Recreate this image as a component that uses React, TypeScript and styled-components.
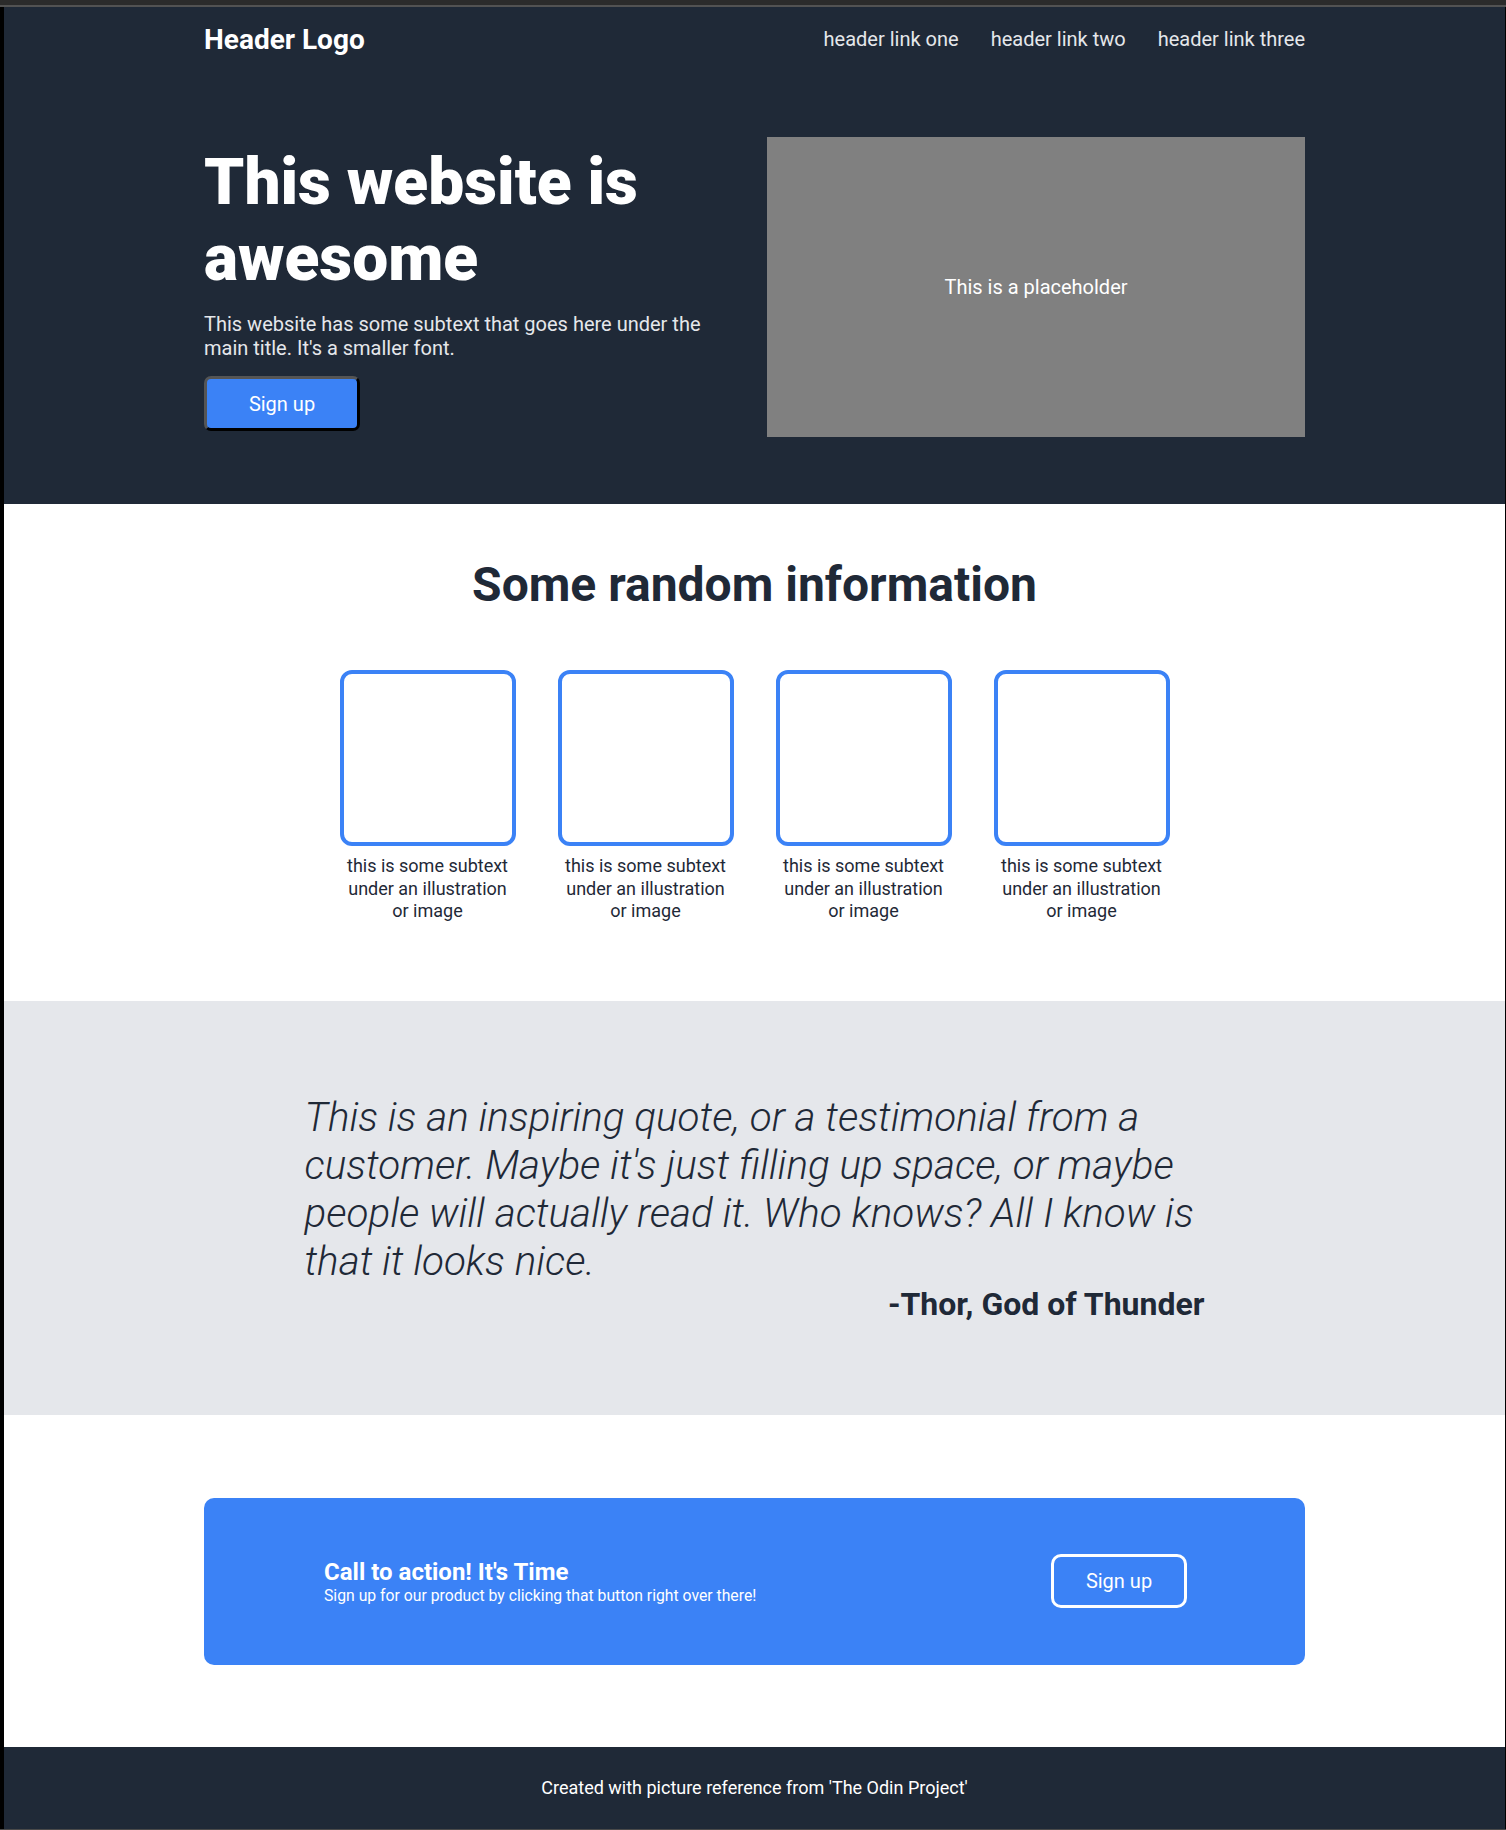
import React from "react";
import styled, { createGlobalStyle } from "styled-components";

const GlobalStyle = createGlobalStyle`
  html, body { margin: 0; padding: 0; background: #ffffff; }
  body { font-family: Roboto, "Liberation Sans", Arial, sans-serif; }
  * { box-sizing: border-box; }
`;

const Window = styled.div`
  width: 1506px;
  border-bottom: 2px solid #4a4a4a;
`;

const Chrome = styled.div`
  height: 7px;
  background: #2b2b2b;
  border-bottom: 2px solid #525252;
`;

const Viewport = styled.div`
  border-left: 4px solid #000;
  border-right: 1px solid #000;
`;

const Dark = styled.div`
  background: #1f2937;
`;

const Container = styled.div<{ $width?: number }>`
  width: ${(p) => p.$width ?? 1101}px;
  margin: 0 auto;
`;

const HeaderBar = styled.header`
  height: 62px;
  display: flex;
  align-items: center;
  justify-content: space-between;
`;

const Logo = styled.div`
  color: #ffffff;
  font-size: 28px;
  font-weight: 700;
  padding-top: 2px;
`;

const Nav = styled.nav`
  display: flex;
  gap: 32px;
  padding-top: 2px;
`;

const NavLink = styled.a`
  color: #e5e7eb;
  font-size: 20px;
  text-decoration: none;
`;

const Hero = styled.section`
  display: flex;
  align-items: center;
  gap: 25px;
  padding: 68px 0 67px;
`;

const HeroText = styled.div`
  flex: 1;
  display: flex;
  flex-direction: column;
  align-items: flex-start;
`;

const Title = styled.h1`
  margin: 2px 0 0;
  color: #ffffff;
  font-size: 64px;
  line-height: 76px;
  font-weight: 900;
`;

const Subtext = styled.p`
  margin: 15px 0 16px;
  color: #e5e7eb;
  font-size: 20px;
  line-height: 24px;
`;

const HeroButton = styled.button`
  width: 156px;
  height: 55px;
  background: #3b82f6;
  color: #ffffff;
  font-family: inherit;
  font-size: 20px;
  border-width: 3px;
  border-style: solid;
  border-color: #555555 #000000 #000000 #555555;
  border-radius: 7px;
  padding: 0;
`;

const Placeholder = styled.div`
  width: 538px;
  height: 300px;
  flex-shrink: 0;
  background: #808080;
  color: #ffffff;
  font-size: 20px;
  display: flex;
  align-items: center;
  justify-content: center;
`;

const InfoSection = styled.section`
  padding: 52px 0 78px;
  display: flex;
  flex-direction: column;
  align-items: center;
`;

const SectionTitle = styled.h2`
  margin: 0;
  color: #1f2937;
  font-size: 48px;
  line-height: 57px;
  font-weight: 700;
`;

const Cards = styled.div`
  margin-top: 57px;
  display: flex;
  gap: 42px;
`;

const Card = styled.div`
  width: 176px;
  display: flex;
  flex-direction: column;
  align-items: center;
`;

const Illustration = styled.div`
  width: 176px;
  height: 176px;
  border: 4px solid #3b82f6;
  border-radius: 12px;
`;

const Caption = styled.p`
  margin: 9px 0 0;
  color: #1f2937;
  font-size: 18px;
  line-height: 22.5px;
  text-align: center;
`;

const QuoteSection = styled.section`
  background: #e5e7eb;
  padding: 93px 0 92px;
`;

const Quote = styled.blockquote`
  margin: 0;
  color: #1f2937;
  font-size: 40.4px;
  line-height: 48px;
  font-style: italic;
  font-weight: 300;
`;

const Author = styled.div`
  text-align: right;
  color: #1f2937;
  font-size: 32px;
  line-height: 37px;
  font-weight: 700;
`;

const CtaSection = styled.section`
  padding: 83px 0 82px;
`;

const CtaBox = styled.div`
  background: #3b82f6;
  border-radius: 10px;
  height: 167px;
  padding: 0 118px 0 120px;
  display: flex;
  align-items: center;
  justify-content: space-between;
`;

const CtaText = styled.div`
  color: #ffffff;
  padding-top: 2px;
`;

const CtaTitle = styled.div`
  font-size: 24px;
  line-height: 27px;
  font-weight: 700;
`;

const CtaSub = styled.div`
  font-size: 15.75px;
  line-height: 19px;
`;

const OutlineButton = styled.button`
  width: 136px;
  height: 54px;
  background: transparent;
  border: 3px solid #ffffff;
  border-radius: 10px;
  color: #ffffff;
  font-family: inherit;
  font-size: 20px;
  padding: 0;
`;

const Footer = styled.footer`
  background: #1f2937;
  height: 82px;
  display: flex;
  align-items: center;
  justify-content: center;
  color: #ffffff;
  font-size: 18px;
`;

const captions = [1, 2, 3, 4];

export default function App() {
  return (
    <>
      <GlobalStyle />
      <Window>
        <Chrome />
        <Viewport>
          <Dark>
            <Container>
              <HeaderBar>
                <Logo>Header Logo</Logo>
                <Nav>
                  <NavLink href="#">header link one</NavLink>
                  <NavLink href="#">header link two</NavLink>
                  <NavLink href="#">header link three</NavLink>
                </Nav>
              </HeaderBar>
              <Hero>
                <HeroText>
                  <Title>This website is awesome</Title>
                  <Subtext>
                    This website has some subtext that goes here under the main title. It's a smaller font.
                  </Subtext>
                  <HeroButton>Sign up</HeroButton>
                </HeroText>
                <Placeholder>This is a placeholder</Placeholder>
              </Hero>
            </Container>
          </Dark>

          <InfoSection>
            <SectionTitle>Some random information</SectionTitle>
            <Cards>
              {captions.map((c) => (
                <Card key={c}>
                  <Illustration />
                  <Caption>this is some subtext under an illustration or image</Caption>
                </Card>
              ))}
            </Cards>
          </InfoSection>

          <QuoteSection>
            <Container $width={900}>
              <Quote>
                This is an inspiring quote, or a testimonial from a customer. Maybe it's just filling up space, or maybe
                people will actually read it. Who knows? All I know is that it looks nice.
              </Quote>
              <Author>-Thor, God of Thunder</Author>
            </Container>
          </QuoteSection>

          <CtaSection>
            <Container>
              <CtaBox>
                <CtaText>
                  <CtaTitle>Call to action! It's Time</CtaTitle>
                  <CtaSub>Sign up for our product by clicking that button right over there!</CtaSub>
                </CtaText>
                <OutlineButton>Sign up</OutlineButton>
              </CtaBox>
            </Container>
          </CtaSection>

          <Footer>Created with picture reference from 'The Odin Project'</Footer>
        </Viewport>
      </Window>
    </>
  );
}
